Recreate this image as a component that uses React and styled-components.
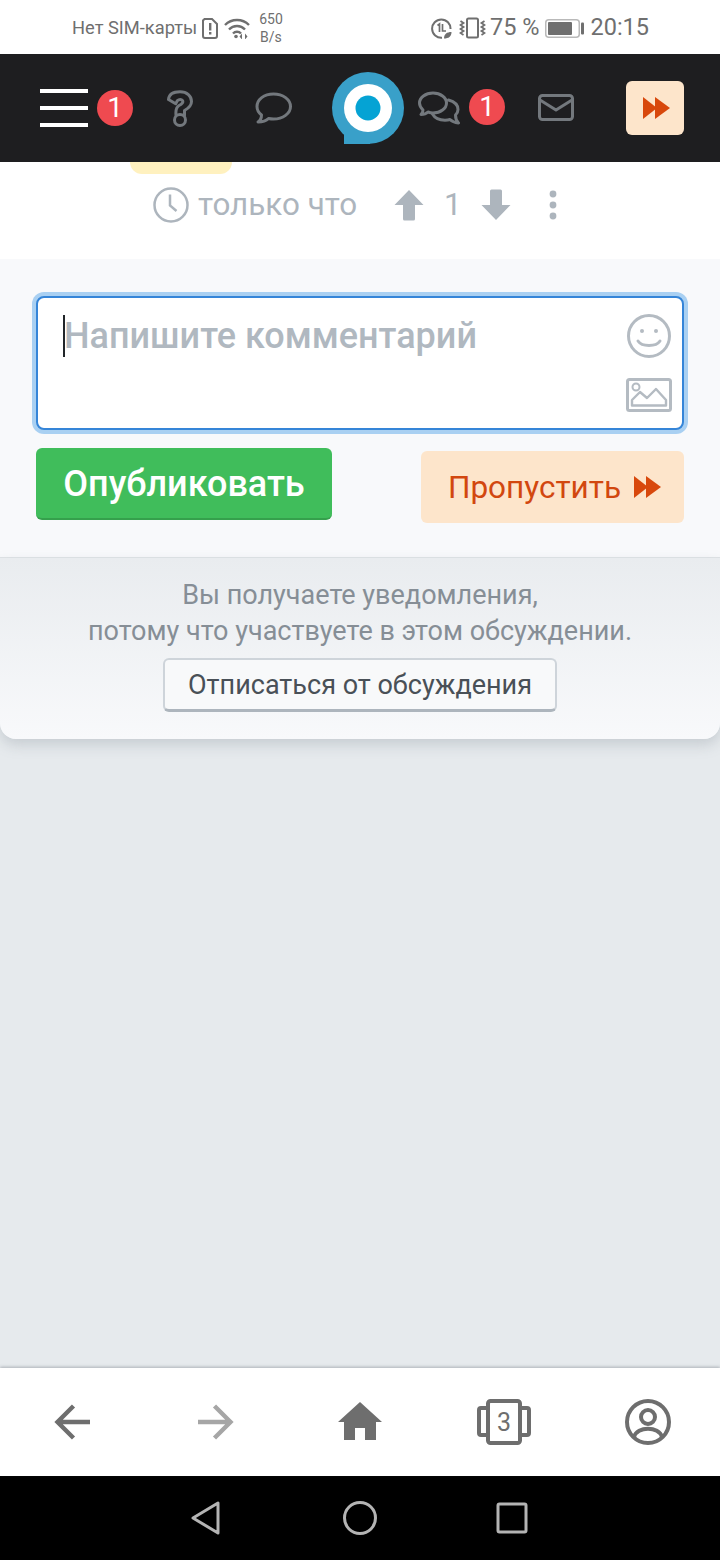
import React from 'react';
import styled, { createGlobalStyle } from 'styled-components';

const Global = createGlobalStyle`
  html, body { margin: 0; padding: 0; }
  body { font-family: Roboto, "Noto Sans", sans-serif; background: #e6eaed; }
`;

const Page = styled.div`
  width: 720px;
  height: 1560px;
  display: flex;
  flex-direction: column;
  overflow: hidden;
  background: #e6eaed;
`;

const StatusBar = styled.div`
  height: 54px;
  flex: none;
  display: flex;
  align-items: center;
  justify-content: space-between;
  padding: 2px 71px 0 72px;
  box-sizing: border-box;
  background: #fff;
  color: #6f6f6f;
`;

const StatusGroup = styled.div`
  display: flex;
  align-items: center;
  gap: ${p => p.$gap || 5}px;
`;

const StatusText = styled.span`
  font-size: ${p => p.$size || 18.3}px;
  line-height: 1;
  white-space: nowrap;
`;

const Speed = styled.span`
  margin-left: 4px;
  font-size: 14px;
  line-height: 18px;
  text-align: center;
  margin-top: -1px;
`;

const Header = styled.header`
  height: 108px;
  flex: none;
  display: flex;
  align-items: center;
  padding-left: 40px;
  box-sizing: border-box;
  background: #1e1e20;
`;

const Burger = styled.div`
  width: 48px;
  display: flex;
  flex-direction: column;
  gap: 13px;
  span {
    height: 4px;
    background: #fff;
  }
`;

const Badge = styled.div`
  width: 36px;
  height: 36px;
  flex: none;
  margin-left: ${p => p.$ml}px;
  margin-top: ${p => p.$mt || 0}px;
  border-radius: 50%;
  background: #ef4a50;
  color: #fff;
  font-size: 28px;
  line-height: 36px;
  text-align: center;
`;

const HeaderIcon = styled.svg`
  flex: none;
  display: block;
  margin-left: ${p => p.$ml}px;
  margin-top: ${p => p.$mt || 0}px;
  fill: none;
  stroke: #73787d;
  stroke-width: 3;
  stroke-linejoin: round;
  stroke-linecap: round;
`;

const SkipTile = styled.div`
  width: 58px;
  height: 54px;
  margin-left: 52px;
  padding-left: 3px;
  box-sizing: border-box;
  flex: none;
  display: flex;
  align-items: center;
  justify-content: center;
  border-radius: 6px;
  background: #fde5cb;
`;

const Meta = styled.section`
  height: 97px;
  flex: none;
  background: #fff;
`;

const Sticker = styled.div`
  width: 102px;
  height: 12px;
  margin-left: 130px;
  border-radius: 0 0 26px 26px;
  background: #fff1bf;
`;

const MetaRow = styled.div`
  display: flex;
  align-items: center;
  height: 62px;
  padding-left: 153px;
  color: #adb5bd;
`;

const MetaText = styled.span`
  margin-left: ${p => p.$ml}px;
  font-size: 31.4px;
  line-height: 38px;
  white-space: nowrap;
`;

const MetaIcon = styled.svg`
  flex: none;
  display: block;
  margin-left: ${p => p.$ml || 0}px;
`;

const Form = styled.section`
  flex: none;
  height: 299px;
  padding: 37px 36px 0;
  box-sizing: border-box;
  background: #f8f9fb;
  border-bottom: 1px solid #dfe3e6;
`;

const Input = styled.div`
  position: relative;
  height: 134px;
  box-sizing: border-box;
  padding: 17px 26px;
  background: #fff;
  border: 2px solid #3585d8;
  border-radius: 8px;
  box-shadow: 0 0 0 4px #a9d0f2;
`;

const Placeholder = styled.div`
  font-size: 36px;
  font-weight: 500;
  line-height: 42px;
  color: #b0b8c0;
  white-space: nowrap;
`;

const Caret = styled.i`
  position: absolute;
  left: 25px;
  top: 17px;
  width: 2px;
  height: 42px;
  background: #212529;
`;

const InputIcon = styled.svg`
  position: absolute;
  right: ${p => p.$right}px;
  top: ${p => p.$top}px;
  fill: none;
  stroke: #b4bbc2;
  stroke-width: 3;
`;

const Actions = styled.div`
  display: flex;
  justify-content: space-between;
  align-items: flex-start;
  margin-top: 18px;
`;

const Publish = styled.button`
  width: 296px;
  height: 72px;
  padding: 2px 0 0;
  border: 0;
  border-bottom: 2px solid #35a04c;
  border-radius: 6px;
  background: #40bd5b;
  color: #fff;
  font-family: inherit;
  font-size: 36px;
  font-weight: 500;
`;

const Skip = styled.button`
  width: 263px;
  height: 72px;
  margin-top: 3px;
  padding: 0 0 0 4px;
  display: flex;
  align-items: center;
  justify-content: center;
  gap: 13px;
  border: 0;
  border-radius: 6px;
  background: #fde5cb;
  color: #d2470f;
  font-family: inherit;
  font-size: 31.5px;
`;

const Notice = styled.section`
  flex: none;
  height: 181px;
  padding-top: 19px;
  box-sizing: border-box;
  text-align: center;
  background: linear-gradient(#e9ecef, #f8f9fb);
  border-radius: 0 0 16px 16px;
  box-shadow: 0 6px 14px rgba(120, 130, 140, 0.28);
  color: #868e96;
  font-size: 27px;
  line-height: 36px;
`;

const Unsubscribe = styled.button`
  display: block;
  width: 394px;
  height: 54px;
  margin: 9px auto 0;
  padding: 0;
  box-sizing: border-box;
  border: 2px solid #ced4da;
  border-bottom: 3px solid #adb5bd;
  border-radius: 6px;
  background: #f8f9fa;
  color: #495057;
  font-family: inherit;
  font-size: 27px;
`;

const Spacer = styled.div`
  flex: 1;
`;

const BottomNav = styled.nav`
  height: 108px;
  flex: none;
  display: grid;
  grid-template-columns: repeat(5, 144px);
  align-items: center;
  justify-items: center;
  background: #fff;
  box-shadow: 0 -1px 3px rgba(60, 70, 80, 0.35);
  position: relative;
`;

const TabsIcon = styled.div`
  position: relative;
  width: 54px;
  height: 46px;
  display: flex;
  align-items: center;
  justify-content: center;
  color: #6e6e6e;
  font-size: 25px;
  svg { position: absolute; inset: 0; }
  span { position: relative; }
`;

const SystemNav = styled.div`
  height: 84px;
  flex: none;
  display: flex;
  align-items: center;
  padding-left: 190px;
  box-sizing: border-box;
  background: #000;
  svg {
    display: block;
    fill: none;
    stroke: #b4b4b4;
    stroke-width: 3;
    stroke-linejoin: round;
    flex: none;
  }
`;

const Forward = () => (
  <svg width="27" height="22" viewBox="0 0 27 22" fill="#d8480c">
    <path d="M0 0 L14 11 L0 22 Z" />
    <path d="M12 0 L27 11 L12 22 Z" />
  </svg>
);

export default function App() {
  return (
    <Page>
      <Global />
      <StatusBar>
        <StatusGroup>
          <StatusText>Нет SIM-карты</StatusText>
          <svg width="16" height="21" viewBox="0 0 16 21">
            <path d="M2.5 1 H10 L15 6 V18 a2 2 0 0 1 -2 2 H3 a2 2 0 0 1 -2 -2 V2.5 Z" fill="none" stroke="#6f6f6f" strokeWidth="2" />
            <path d="M7 5 h2.4 v7.5 H7 Z M7 14 h2.4 v2.6 H7 Z" fill="#6f6f6f" />
          </svg>
          <svg width="26" height="21" viewBox="0 0 26 21" fill="none" stroke="#6f6f6f" strokeWidth="2.4" style={{ marginLeft: 1 }}>
            <path d="M1 7 a17 17 0 0 1 24 0" />
            <path d="M5 11.5 a11 11 0 0 1 16 0" />
            <path d="M9 15.5 a5.5 5.5 0 0 1 8 0" />
            <circle cx="12" cy="18.5" r="1.8" fill="#6f6f6f" stroke="none" />
            <path d="M15.5 18.5 l2.5 -3 v6 Z M23.5 18.5 l-2.5 -3 v6 Z" fill="#6f6f6f" stroke="none" />
          </svg>
          <Speed>650<br />B/s</Speed>
        </StatusGroup>
        <StatusGroup $gap={4}>
          <svg width="21" height="21" viewBox="0 0 21 21" fill="none" stroke="#6f6f6f">
            <path d="M19.5 11 A9.2 9.2 0 1 0 11 19.8" strokeWidth="2" />
            <path d="M6.5 7.5 l2 -1.5 v8 M11.5 6 v7 h3.5" strokeWidth="1.7" />
            <path d="M13 20.5 c0 -4.5 3 -6.5 7.5 -6.5 c0 4.5 -3 6.5 -7.5 6.5 Z" fill="#6f6f6f" stroke="none" />
          </svg>
          <svg width="27" height="22" viewBox="0 0 27 22" fill="none" stroke="#6f6f6f" style={{ marginLeft: 3 }}>
            <rect x="8" y="1.5" width="11" height="19" rx="1.5" strokeWidth="2" />
            <path d="M1.5 4 l3 2 -3 2 3 2 -3 2 3 2 -3 2 3 2 M25.5 4 l-3 2 3 2 -3 2 3 2 -3 2 3 2 -3 2" strokeWidth="1.8" />
          </svg>
          <StatusText $size={23.5}>75 %</StatusText>
          <svg width="39" height="19" viewBox="0 0 39 19" style={{ marginLeft: 2 }}>
            <rect x="0.75" y="0.75" width="33.5" height="17.5" rx="3" fill="none" stroke="#b9b9b9" strokeWidth="1.5" />
            <rect x="3" y="3" width="24" height="13" rx="1" fill="#6f6f6f" />
            <rect x="36" y="3.5" width="3" height="12" rx="1" fill="#6f6f6f" />
          </svg>
          <StatusText $size={23.5} style={{ marginLeft: 2 }}>20:15</StatusText>
        </StatusGroup>
      </StatusBar>

      <Header>
        <Burger><span /><span /><span /></Burger>
        <Badge $ml={9}>1</Badge>
        <HeaderIcon $ml={34} width="26" height="37" viewBox="0 0 26 37">
          <path d="M1.5 9.5 C2 4 7 1.7 13 1.7 C20 1.7 24.5 6 24.5 11.5 C24.5 16 21 18.5 17.5 20.5 L17.5 25.5 M9 25 C8.5 20 9.5 17 12 15.5 C15 14 16.5 12.5 15.5 10.5 C14.5 9 12 9 10.5 10.5 L8.7 13.7 L1.5 9.5" />
          <circle cx="13" cy="30" r="5.5" />
        </HeaderIcon>
        <HeaderIcon $ml={62} $mt={-1} width="37" height="32" viewBox="0 0 37 32">
          <path d="M18.5 2 C9 2 2 7.5 2 14.5 C2 18 4 21 6.5 23 C6.5 26 4.5 29 3 30 C8 30 11.5 28.5 13.5 26.5 C15 26.8 16.8 27 18.5 27 C28 27 35.5 21.5 35.5 14.5 C35.5 7.5 28 2 18.5 2 Z" />
        </HeaderIcon>
        <svg width="72" height="72" viewBox="0 0 72 72" style={{ marginLeft: 40, flex: 'none', display: 'block' }}>
          <rect x="12" y="40" width="26" height="32" fill="#39a0c9" />
          <circle cx="36" cy="36" r="36" fill="#39a0c9" />
          <circle cx="36" cy="36" r="24" fill="#fff" />
          <circle cx="36" cy="36" r="12.5" fill="#05a3d4" />
        </svg>
        <HeaderIcon $ml={14} $mt={-1} width="42" height="34" viewBox="0 0 42 34">
          <path d="M15 2 C7.5 2 1.5 6.5 1.5 12 C1.5 15 3.5 17.5 5 19 C5 21 4 22.5 3 23.5 C6 23.5 8.5 22.5 10 21 C11.5 21.6 13.5 22 15 22 C22.5 22 28.5 17.5 28.5 12 C28.5 6.5 22.5 2 15 2 Z" />
          <path d="M30.5 9 C36 10.5 40 14 40 18.5 C40 21 38.5 23 37.5 24 C37.5 27 38.5 30 40.5 32 C36.5 31.5 33.5 30 32 28.5 C30.5 29 29 29.2 27 29.2 C21.5 29.2 16.5 26.5 14.5 23" />
        </HeaderIcon>
        <Badge $ml={9} $mt={-2}>1</Badge>
        <HeaderIcon $ml={33} $mt={-2} width="36" height="27" viewBox="0 0 36 27">
          <rect x="1.5" y="1.5" width="33" height="24" rx="3" />
          <path d="M2 6 L18 16 L34 6" />
        </HeaderIcon>
        <SkipTile><Forward /></SkipTile>
      </Header>

      <Meta>
        <Sticker />
        <MetaRow>
          <MetaIcon width="36" height="36" viewBox="0 0 36 36" fill="none" stroke="#adb5bd" strokeWidth="2.5">
            <circle cx="18" cy="18" r="16.5" />
            <path d="M17 7.5 V18.5 L23.5 24" />
          </MetaIcon>
          <MetaText $ml={9}>только что</MetaText>
          <MetaIcon $ml={37} width="30" height="32" viewBox="0 0 30 32" fill="#adb5bd">
            <path d="M15 1 L29.5 16 H21 V30 a1.5 1.5 0 0 1 -1.5 1.5 H10.5 A1.5 1.5 0 0 1 9 30 V16 H0.5 Z" />
          </MetaIcon>
          <MetaText $ml={20}>1</MetaText>
          <MetaIcon $ml={19} width="30" height="32" viewBox="0 0 30 32" fill="#adb5bd">
            <path d="M15 31 L29.5 16 H21 V2 A1.5 1.5 0 0 0 19.5 0.5 H10.5 A1.5 1.5 0 0 0 9 2 V16 H0.5 Z" />
          </MetaIcon>
          <MetaIcon $ml={35} width="14" height="32" viewBox="0 0 14 32" fill="#adb5bd">
            <circle cx="7" cy="5" r="3.4" />
            <circle cx="7" cy="16" r="3.4" />
            <circle cx="7" cy="27" r="3.4" />
          </MetaIcon>
        </MetaRow>
      </Meta>

      <Form>
        <Input>
          <Caret />
          <Placeholder>Напишите комментарий</Placeholder>
          <InputIcon $right={11} $top={16} width="44" height="44" viewBox="0 0 44 44">
            <circle cx="22" cy="22" r="20.5" />
            <circle cx="15" cy="17" r="2" fill="#b4bbc2" stroke="none" />
            <circle cx="29" cy="17" r="2" fill="#b4bbc2" stroke="none" />
            <path d="M11 27 C15 33 29 33 33 27" strokeLinecap="round" />
          </InputIcon>
          <InputIcon $right={10} $top={80} width="46" height="34" viewBox="0 0 46 34">
            <rect x="1.5" y="1.5" width="43" height="31" rx="2" />
            <circle cx="10" cy="9" r="3.5" strokeWidth="2" />
            <path d="M6 27.5 H40 V22 L30 11 L21 20 L14 14 L6 22 Z" strokeWidth="2.4" strokeLinejoin="round" />
          </InputIcon>
        </Input>
        <Actions>
          <Publish>Опубликовать</Publish>
          <Skip>Пропустить <Forward /></Skip>
        </Actions>
      </Form>

      <Notice>
        Вы получаете уведомления,<br />
        потому что участвуете в этом обсуждении.
        <Unsubscribe>Отписаться от обсуждения</Unsubscribe>
      </Notice>

      <Spacer />

      <BottomNav>
        <svg width="38" height="38" viewBox="0 0 38 38" fill="none" stroke="#6e6e6e" strokeWidth="4.4">
          <path d="M37 19 H5 M20.5 3 L4.5 19 L20.5 35" />
        </svg>
        <svg width="38" height="38" viewBox="0 0 38 38" fill="none" stroke="#a6a6a6" strokeWidth="4.4">
          <path d="M1 19 H33 M17.5 3 L33.5 19 L17.5 35" />
        </svg>
        <svg width="44" height="40" viewBox="0 0 44 40" fill="#6e6e6e">
          <path d="M22 0 L44 20 H38 V38 H27 V26 H17 V38 H6 V20 H0 Z" />
        </svg>
        <TabsIcon>
          <svg width="54" height="46" viewBox="0 0 54 46" fill="none" stroke="#6e6e6e" strokeWidth="4" strokeLinejoin="round">
            <rect x="11" y="2" width="32" height="42" rx="2.5" />
            <path d="M11 9 H4 a2 2 0 0 0 -2 2 V34 a2 2 0 0 0 2 2 H11 M43 9 H50 a2 2 0 0 1 2 2 V34 a2 2 0 0 1 -2 2 H43" />
          </svg>
          <span>3</span>
        </TabsIcon>
        <svg width="46" height="46" viewBox="0 0 46 46" fill="none" stroke="#6e6e6e" strokeWidth="4">
          <circle cx="23" cy="23" r="21" />
          <circle cx="23" cy="18" r="7" />
          <path d="M9 38 C12 27 34 27 37 38" />
        </svg>
      </BottomNav>

      <SystemNav>
        <svg width="30" height="34" viewBox="0 0 30 34"><path d="M3 17 L28 2 V32 Z" /></svg>
        <svg width="34" height="34" viewBox="0 0 34 34" style={{ marginLeft: 123 }}><circle cx="17" cy="17" r="15.5" /></svg>
        <svg width="32" height="32" viewBox="0 0 32 32" style={{ marginLeft: 119 }}><rect x="2" y="2" width="28" height="28" rx="1.5" /></svg>
      </SystemNav>
    </Page>
  );
}
